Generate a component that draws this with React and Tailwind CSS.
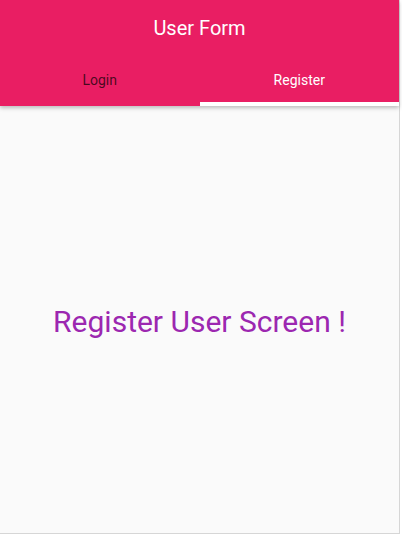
import { useState } from "react";

export default function App() {
    const [tab, setTab] = useState("register");

    return (
        <div className="w-[402px] h-[536px] bg-white" style={{ fontFamily: "Roboto, 'Noto Sans', sans-serif" }}>
            <div className="w-[400px] h-[534px] flex flex-col bg-[#fafafa] border-r border-b border-[#d6d6d6]">
                {/* header + tabs */}
                <div className="bg-[#e91e63] shadow-[0_2px_4px_rgba(0,0,0,0.25)] z-10">
                    <div className="h-[56px] flex items-center justify-center">
                        <p className="text-white text-[20px] m-0">User Form</p>
                    </div>
                    <div className="flex h-[50px]">
                        <div
                            className="flex-1 flex flex-col cursor-pointer"
                            onClick={() => setTab("login")}
                        >
                            <div className={`flex-1 flex items-center justify-center text-[14px] pt-[2px] ${tab === "login" ? "text-white" : "text-black/70"}`}>
                                Login
                            </div>
                            <div className={`h-[4px] ${tab === "login" ? "bg-white" : ""}`} />
                        </div>
                        <div
                            className="flex-1 flex flex-col cursor-pointer"
                            onClick={() => setTab("register")}
                        >
                            <div className={`flex-1 flex items-center justify-center text-[14px] pt-[2px] ${tab === "register" ? "text-white" : "text-black/70"}`}>
                                Register
                            </div>
                            <div className={`h-[4px] ${tab === "register" ? "bg-white" : ""}`} />
                        </div>
                    </div>
                </div>

                {/* body */}
                <div className="flex-1 flex items-center justify-center pt-[3px]">
                    <p className="text-[#9c27b0] text-[30px] m-0">
                        {tab === "register" ? "Register User Screen !" : "Login User Screen !"}
                    </p>
                </div>
            </div>
        </div>
    );
}
